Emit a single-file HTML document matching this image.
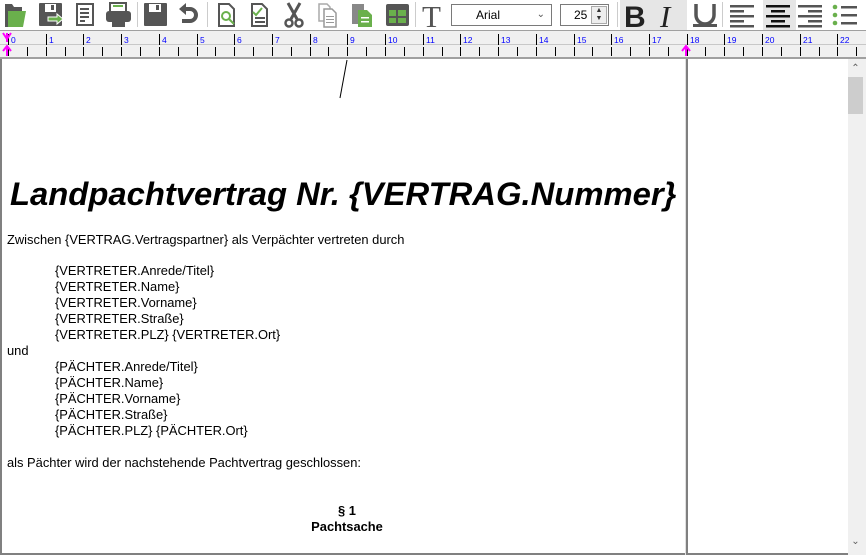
<!DOCTYPE html>
<html><head><meta charset="utf-8">
<style>
*{margin:0;padding:0;box-sizing:border-box}
body{width:866px;height:555px;overflow:hidden;background:#fff;font-family:"Liberation Sans",Arial,sans-serif;position:relative}
.abs{position:absolute}
.t{position:absolute;font-size:12.9px;line-height:16px;color:#000;white-space:nowrap}
</style></head><body>
<div class="abs" style="left:0;top:0;width:866px;height:31px;background:#fff"></div>
<div class="abs" style="left:620px;top:0;width:67px;height:30px;background:#e6e6e6"></div>
<div class="abs" style="left:763px;top:0;width:33px;height:30px;background:#e6e6e6"></div>
<svg class="abs" style="left:0;top:0" width="866" height="31">
 <g fill="#555">
  <path d="M5 4h7l2 3h8v5H5z"/><path d="M8 11h18l-3 16H6z" fill="#6ab04c"/><path d="M5 12h3v15H5z"/>
  <rect x="39" y="3" width="23" height="23" rx="1"/><rect x="45" y="4" width="11" height="8" fill="#fff"/><rect x="51" y="5" width="3" height="5"/>
  <path d="M48 17h9v-3l6 5-6 5v-3h-9z" fill="#6ab04c" stroke="#fff" stroke-width="1"/>
  <rect x="77" y="4" width="16" height="21" fill="none" stroke="#555" stroke-width="2"/><rect x="80" y="8" width="9" height="2"/><rect x="80" y="12" width="9" height="2"/><rect x="80" y="16" width="9" height="2"/><rect x="80" y="20" width="5" height="2"/>
  <rect x="110" y="3" width="16" height="9" fill="#fff" stroke="#555" stroke-width="2"/><rect x="113" y="5" width="10" height="2" fill="#6ab04c"/><rect x="106" y="11" width="25" height="11" rx="3"/><rect x="112" y="19" width="13" height="8"/>
  <rect x="137" y="2" width="1" height="25" fill="#ccc"/>
  <rect x="144" y="3" width="23" height="23" rx="1"/><rect x="149" y="4" width="12" height="8" fill="#fff"/><rect x="156" y="5" width="3" height="5"/><rect x="149" y="17" width="13" height="8" fill="#555"/>
  <path d="M184 9h6a6 6 0 0 1 0 12h-8" fill="none" stroke="#555" stroke-width="4"/><path d="M179 9l7-6v12z"/>
  <rect x="207" y="2" width="1" height="25" fill="#ccc"/>
  <path d="M219 4h10l5 5v17h-15z" fill="none" stroke="#555" stroke-width="2"/><circle cx="226" cy="16" r="4" fill="none" stroke="#6ab04c" stroke-width="2"/><path d="M229 19l5 5" stroke="#6ab04c" stroke-width="2"/>
  <path d="M252 4h10l5 5v17h-15z" fill="none" stroke="#555" stroke-width="2"/><rect x="255" y="17" width="10" height="2"/><rect x="255" y="21" width="10" height="2"/><path d="M253 12l3 3 6-7" fill="none" stroke="#6ab04c" stroke-width="2"/>
  <path d="M288 3l9 16M300 3l-9 16" stroke="#555" stroke-width="3"/><circle cx="289" cy="23" r="3.5" fill="none" stroke="#555" stroke-width="2.5"/><circle cx="299" cy="23" r="3.5" fill="none" stroke="#555" stroke-width="2.5"/>
  <path d="M319 4h8l3 3v14h-11z" fill="#fff" stroke="#aaa" stroke-width="1.5"/><path d="M324 9h8l4 4v14h-12z" fill="#fff" stroke="#999" stroke-width="1.5"/><rect x="326" y="16" width="8" height="1" fill="#999"/><rect x="326" y="19" width="8" height="1" fill="#999"/><rect x="326" y="22" width="8" height="1" fill="#999"/>
  <rect x="352" y="4" width="12" height="20" fill="#888"/><path d="M358 10h9l5 5v12h-14z" fill="#6ab04c"/><rect x="361" y="17" width="8" height="1.5" fill="#fff"/><rect x="361" y="21" width="8" height="1.5" fill="#fff"/>
  <rect x="386" y="4" width="23" height="22" rx="2"/><rect x="389" y="10" width="7" height="6" fill="#6ab04c"/><rect x="398" y="10" width="8" height="6" fill="#6ab04c"/><rect x="389" y="18" width="7" height="5" fill="#6ab04c"/><rect x="398" y="18" width="8" height="5" fill="#6ab04c"/>
  <rect x="415" y="2" width="1" height="25" fill="#ccc"/>
  <rect x="617" y="2" width="1" height="25" fill="#ccc"/>
  <rect x="722" y="2" width="1" height="25" fill="#ccc"/>
  <g fill="#555"><rect x="730" y="5" width="24" height="2.5"/><rect x="730" y="10" width="14" height="2.5"/><rect x="730" y="15" width="24" height="2.5"/><rect x="730" y="20" width="14" height="2.5"/><rect x="730" y="25" width="24" height="2.5"/></g>
  <g fill="#111"><rect x="766" y="5" width="24" height="2.5"/><rect x="771" y="10" width="14" height="2.5"/><rect x="766" y="15" width="24" height="2.5"/><rect x="771" y="20" width="14" height="2.5"/><rect x="766" y="25" width="24" height="2.5"/></g>
  <g fill="#555"><rect x="798" y="5" width="24" height="2.5"/><rect x="808" y="10" width="14" height="2.5"/><rect x="798" y="15" width="24" height="2.5"/><rect x="808" y="20" width="14" height="2.5"/><rect x="798" y="25" width="24" height="2.5"/></g>
  <g><circle cx="835" cy="7" r="2.3" fill="#6ab04c"/><circle cx="835" cy="15" r="2.3" fill="#6ab04c"/><circle cx="835" cy="23" r="2.3" fill="#6ab04c"/><rect x="841" y="6" width="16" height="2.5"/><rect x="841" y="14" width="16" height="2.5"/><rect x="841" y="22" width="16" height="2.5"/></g>
  <path d="M696 4v11a9 9 0 0 0 18 0V4" fill="none" stroke="#555" stroke-width="3.5"/>
  <rect x="693" y="24" width="24" height="3"/>
 </g>
 <text x="422" y="27" font-family="Liberation Serif" font-size="31" fill="#555">T</text>
 <text x="624" y="27" font-family="Liberation Sans" font-weight="bold" font-size="30" fill="#222">B</text>
 <text x="660" y="27" font-family="Liberation Serif" font-style="italic" font-size="31" fill="#222">I</text>
</svg>
<div class="abs" style="left:451px;top:4px;width:101px;height:22px;border:1px solid #7a7a7a;background:#fff;font-size:12px;line-height:20px;padding-left:24px">Arial<span style="position:absolute;right:6px;top:0;color:#555;font-size:10px">&#8964;</span></div>
<div class="abs" style="left:560px;top:4px;width:49px;height:22px;border:1px solid #7a7a7a;background:#fff;font-size:12px;line-height:20px;padding-left:13px">25</div>
<div class="abs" style="left:591px;top:6px;width:16px;height:18px;border:1px solid #aaa;background:#eee;font-size:7px;line-height:8px;text-align:center;color:#333">&#9650;<br>&#9660;</div>
<div class="abs" style="left:0;top:30px;width:866px;height:29px;background:#f0f0f0;border-top:1px solid #a0a0a0;border-bottom:2px solid #a0a0a0"></div>
<div class="abs" style="left:0;top:44px;width:866px;height:1px;background:#c8c8c8"></div>
<svg id="rul" class="abs" style="left:0;top:31px" width="866" height="27"></svg>
<div class="abs" style="left:0;top:59px;width:2px;height:496px;background:#808080"></div>
<div class="abs" style="left:0;top:553px;width:848px;height:2px;background:#808080"></div>
<div class="abs" style="left:686px;top:59px;width:2px;height:496px;background:#808080"></div>
<div class="abs" style="left:685px;top:59px;width:1px;height:496px;background:#e0e0e0"></div>
<div class="abs" style="left:848px;top:59px;width:18px;height:496px;background:#f0f0f0"></div>
<div class="abs" style="left:848px;top:77px;width:15px;height:37px;background:#cdcdcd"></div>
<div class="abs" style="left:848px;top:62px;width:15px;height:14px;color:#606060;font-size:10px;text-align:center;line-height:14px">&#8963;</div>
<div class="abs" style="left:848px;top:535px;width:15px;height:14px;color:#606060;font-size:10px;text-align:center;line-height:14px">&#8964;</div>
<svg class="abs" style="left:0;top:0" width="866" height="555"><path d="M347 60L340 98" stroke="#000" stroke-width="1"/></svg>
<div class="t" style="left:10px;top:174px;font-size:32.8px;line-height:40px;font-weight:bold;font-style:italic">Landpachtvertrag Nr. {VERTRAG.Nummer}</div>
<div class="t" style="left:7px;top:232px">Zwischen {VERTRAG.Vertragspartner} als Verpächter vertreten durch</div>
<div class="t" style="left:55px;top:263px">{VERTRETER.Anrede/Titel}<br>{VERTRETER.Name}<br>{VERTRETER.Vorname}<br>{VERTRETER.Straße}<br>{VERTRETER.PLZ} {VERTRETER.Ort}</div>
<div class="t" style="left:7px;top:343px">und</div>
<div class="t" style="left:55px;top:359px">{PÄCHTER.Anrede/Titel}<br>{PÄCHTER.Name}<br>{PÄCHTER.Vorname}<br>{PÄCHTER.Straße}<br>{PÄCHTER.PLZ} {PÄCHTER.Ort}</div>
<div class="t" style="left:7px;top:455px">als Pächter wird der nachstehende Pachtvertrag geschlossen:</div>
<div class="t" style="left:247px;top:503px;width:200px;text-align:center;font-weight:bold">§ 1<br>Pachtsache</div>
<script>
var s='',u=37.7,o=8;
for(var n=0;n<=23;n++){var x=Math.round(o+n*u);
 if(x<862){s+='<rect x="'+x+'" y="3" width="1" height="11" fill="#000"/>';
 s+='<text x="'+(x+3)+'" y="12" font-size="8.5" fill="#00f" font-family="Liberation Sans">'+n+'</text>';
 s+='<rect x="'+x+'" y="16" width="1" height="9" fill="#000"/>';}
 var h=Math.round(o+(n+0.5)*u); if(h<862) s+='<rect x="'+h+'" y="16" width="1" height="9" fill="#000"/>';}
s+='<path d="M3 2l4 6 4-6M7 2v9" stroke="#f0f" stroke-width="2" fill="none"/>';
s+='<path d="M3 20l4-5 4 5M7 15v10" stroke="#f0f" stroke-width="2" fill="none"/>';
s+='<path d="M682 20l4-5 4 5M686 15v10" stroke="#f0f" stroke-width="2" fill="none"/>';
document.getElementById('rul').innerHTML=s;
</script>
</body></html>
